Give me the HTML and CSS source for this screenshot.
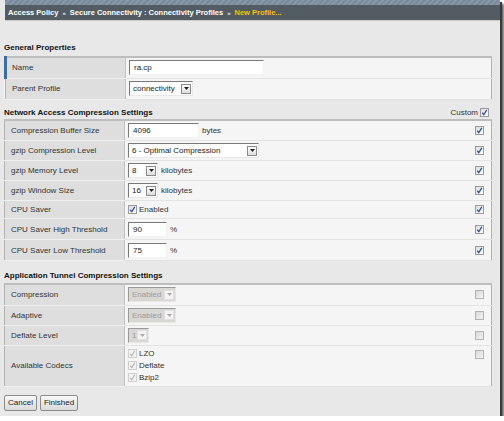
FILE: index.html
```html
<!DOCTYPE html>
<html>
<head>
<meta charset="utf-8">
<link rel="stylesheet" href="styles.css">
</head>
<body>
<div class="frame">
  <div class="topbar">
    <div class="stripe"></div>
    <div class="crumbs">
      <span>Access Policy</span><span class="sep">»</span><span>Secure Connectivity : Connectivity Profiles</span><span class="sep">»</span><span class="cur">New Profile...</span>
    </div>
  </div>

  <div class="content">
    <div class="sec-head first">General Properties</div>
    <table class="props">
      <tr class="r21">
        <td class="lbl marked">Name</td>
        <td class="val"><span class="input w135">ra.cp</span></td>
        <td class="chk"></td>
      </tr>
      <tr class="r21">
        <td class="lbl">Parent Profile</td>
        <td class="val"><span class="select w64"><span class="sel-text">connectivity</span><span class="sel-btn"><svg width="5" height="3" viewBox="0 0 5 3"><path d="M0 0H5L2.5 3Z" fill="#222"/></svg></span></span></td>
        <td class="chk"></td>
      </tr>
    </table>

    <div class="sec-head">
      <span>Network Access Compression Settings</span>
      <span class="custom">Custom <span class="cb on"><svg width="7" height="7" viewBox="0 0 7 7"><path d="M1.2 3.8L2.8 5.6L5.8 0.8" fill="none" stroke="#3552a8" stroke-width="1.3"/></svg></span></span>
    </div>
    <table class="props">
      <tr class="r21">
        <td class="lbl">Compression Buffer Size</td>
        <td class="val"><span class="input w71">4096</span><span class="unit">bytes</span></td>
        <td class="chk"><span class="cb on"><svg width="7" height="7" viewBox="0 0 7 7"><path d="M1.2 3.8L2.8 5.6L5.8 0.8" fill="none" stroke="#3552a8" stroke-width="1.3"/></svg></span></td>
      </tr>
      <tr class="r20">
        <td class="lbl">gzip Compression Level</td>
        <td class="val"><span class="select w131"><span class="sel-text">6 - Optimal Compression</span><span class="sel-btn"><svg width="5" height="3" viewBox="0 0 5 3"><path d="M0 0H5L2.5 3Z" fill="#222"/></svg></span></span></td>
        <td class="chk"><span class="cb on"><svg width="7" height="7" viewBox="0 0 7 7"><path d="M1.2 3.8L2.8 5.6L5.8 0.8" fill="none" stroke="#3552a8" stroke-width="1.3"/></svg></span></td>
      </tr>
      <tr class="r20">
        <td class="lbl">gzip Memory Level</td>
        <td class="val"><span class="select w30"><span class="sel-text">8</span><span class="sel-btn"><svg width="5" height="3" viewBox="0 0 5 3"><path d="M0 0H5L2.5 3Z" fill="#222"/></svg></span></span><span class="unit">kilobytes</span></td>
        <td class="chk"><span class="cb on"><svg width="7" height="7" viewBox="0 0 7 7"><path d="M1.2 3.8L2.8 5.6L5.8 0.8" fill="none" stroke="#3552a8" stroke-width="1.3"/></svg></span></td>
      </tr>
      <tr class="r20">
        <td class="lbl">gzip Window Size</td>
        <td class="val"><span class="select w30"><span class="sel-text">16</span><span class="sel-btn"><svg width="5" height="3" viewBox="0 0 5 3"><path d="M0 0H5L2.5 3Z" fill="#222"/></svg></span></span><span class="unit">kilobytes</span></td>
        <td class="chk"><span class="cb on"><svg width="7" height="7" viewBox="0 0 7 7"><path d="M1.2 3.8L2.8 5.6L5.8 0.8" fill="none" stroke="#3552a8" stroke-width="1.3"/></svg></span></td>
      </tr>
      <tr class="r18">
        <td class="lbl">CPU Saver</td>
        <td class="val"><span class="inline-cb"><span class="cb on"><svg width="7" height="7" viewBox="0 0 7 7"><path d="M1.2 3.8L2.8 5.6L5.8 0.8" fill="none" stroke="#3552a8" stroke-width="1.3"/></svg></span>Enabled</span></td>
        <td class="chk"><span class="cb on"><svg width="7" height="7" viewBox="0 0 7 7"><path d="M1.2 3.8L2.8 5.6L5.8 0.8" fill="none" stroke="#3552a8" stroke-width="1.3"/></svg></span></td>
      </tr>
      <tr class="r21">
        <td class="lbl">CPU Saver High Threshold</td>
        <td class="val"><span class="input w39">90</span><span class="unit">%</span></td>
        <td class="chk"><span class="cb on"><svg width="7" height="7" viewBox="0 0 7 7"><path d="M1.2 3.8L2.8 5.6L5.8 0.8" fill="none" stroke="#3552a8" stroke-width="1.3"/></svg></span></td>
      </tr>
      <tr class="r21">
        <td class="lbl">CPU Saver Low Threshold</td>
        <td class="val"><span class="input w39">75</span><span class="unit">%</span></td>
        <td class="chk"><span class="cb on"><svg width="7" height="7" viewBox="0 0 7 7"><path d="M1.2 3.8L2.8 5.6L5.8 0.8" fill="none" stroke="#3552a8" stroke-width="1.3"/></svg></span></td>
      </tr>
    </table>

    <div class="sec-head third">Application Tunnel Compression Settings</div>
    <table class="props">
      <tr class="r21">
        <td class="lbl">Compression</td>
        <td class="val"><span class="select dis w48"><span class="sel-text">Enabled</span><span class="sel-btn"><svg width="5" height="3" viewBox="0 0 5 3"><path d="M0 0H5L2.5 3Z" fill="#aaa"/></svg></span></span></td>
        <td class="chk"><span class="cb off"></span></td>
      </tr>
      <tr class="r20">
        <td class="lbl">Adaptive</td>
        <td class="val"><span class="select dis w48"><span class="sel-text">Enabled</span><span class="sel-btn"><svg width="5" height="3" viewBox="0 0 5 3"><path d="M0 0H5L2.5 3Z" fill="#aaa"/></svg></span></span></td>
        <td class="chk"><span class="cb off"></span></td>
      </tr>
      <tr class="r20">
        <td class="lbl">Deflate Level</td>
        <td class="val"><span class="select dis w21"><span class="sel-text">1</span><span class="sel-btn"><svg width="5" height="3" viewBox="0 0 5 3"><path d="M0 0H5L2.5 3Z" fill="#aaa"/></svg></span></span></td>
        <td class="chk"><span class="cb off"></span></td>
      </tr>
      <tr class="r41">
        <td class="lbl">Available Codecs</td>
        <td class="val">
          <div class="codecs">
            <span class="inline-cb"><span class="cb dim"><svg width="7" height="7" viewBox="0 0 7 7"><path d="M1.2 3.8L2.8 5.6L5.8 0.8" fill="none" stroke="#b4b4b4" stroke-width="1.1"/></svg></span>LZO</span>
            <span class="inline-cb"><span class="cb dim"><svg width="7" height="7" viewBox="0 0 7 7"><path d="M1.2 3.8L2.8 5.6L5.8 0.8" fill="none" stroke="#b4b4b4" stroke-width="1.1"/></svg></span>Deflate</span>
            <span class="inline-cb"><span class="cb dim"><svg width="7" height="7" viewBox="0 0 7 7"><path d="M1.2 3.8L2.8 5.6L5.8 0.8" fill="none" stroke="#b4b4b4" stroke-width="1.1"/></svg></span>Bzip2</span>
          </div>
        </td>
        <td class="chk top"><span class="cb off"></span></td>
      </tr>
    </table>

    <div class="buttons">
      <button class="btn">Cancel</button>
      <button class="btn">Finished</button>
    </div>
  </div>
</div>
</body>
</html>
```

FILE: styles.css
```css
html, body {
  margin: 0;
  padding: 0;
  background: #ffffff;
}
body {
  font-family: "Liberation Sans", Arial, sans-serif;
  font-size: 8px;
  color: #222;
}
.frame {
  width: 500px;
  height: 416px;
  background: #e8e8e8;
  box-shadow: 2px 2px 0 #3a3a3a, 4px 4px 2px #666;
  overflow: hidden;
}
.topbar {
  margin-left: 5px;
}
.stripe {
  height: 5px;
  background: repeating-linear-gradient(135deg, #7a8a9a 0px, #7a8a9a 2px, #8797a7 2px, #8797a7 4px);
}
.crumbs {
  height: 15px;
  background: #535b63;
  border-bottom: 1px solid #c9c9c9;
  color: #ffffff;
  font-weight: bold;
  font-size: 7.5px;
  line-height: 15px;
  padding-left: 3px;
  white-space: nowrap;
}
.crumbs .sep {
  font-size: 6px;
  margin: 0 4px;
  color: #e8e8e8;
}
.crumbs .cur {
  color: #f3c400;
}
.content {
  padding: 0 8px 0 4px;
}
.sec-head {
  display: flex;
  justify-content: space-between;
  align-items: flex-end;
  font-weight: bold;
  color: #111;
  height: 10px;
  line-height: 10px;
  margin-top: 8px;
  margin-bottom: 1px;
}
.sec-head.first {
  margin-top: 22px;
  margin-bottom: 3px;
}
.sec-head.third {
  margin-top: 10px;
  margin-bottom: 2px;
}
.custom {
  font-weight: normal;
  color: #333;
  display: flex;
  align-items: center;
  gap: 2px;
  margin-right: 3px;
}
table.props {
  width: 488px;
  border-collapse: collapse;
  border: 1px solid #b2b2b2;
  border-top: 2px solid #bdbdbd;
  background: #f5f5f5;
}
table.props td {
  padding: 0;
  border-bottom: 1px solid #e3e3e3;
  vertical-align: middle;
}
tr.r21 { height: 21px; }
tr.r20 { height: 20px; }
tr.r18 { height: 18px; }
tr.r41 { height: 41px; }
td.lbl {
  width: 113px;
  padding-left: 6px !important;
  background: #dedede;
  border-right: 1px solid #c2c2c2;
  color: #333;
  border-bottom: 1px solid #f0f0f0 !important;
}
td.lbl.marked {
  border-left: 3px solid #3d6da3;
  padding-left: 5px !important;
}
td.val {
  padding-left: 3px !important;
  white-space: nowrap;
}
td.chk {
  width: 16px;
  text-align: left;
}
td.chk.top {
  vertical-align: top;
  padding-top: 4px !important;
}
.input {
  display: inline-block;
  vertical-align: middle;
  box-sizing: border-box;
  height: 15px;
  line-height: 13px;
  background: #ffffff;
  border-top: 1px solid #7a7a7a;
  border-left: 1px solid #7a7a7a;
  border-right: 1px solid #f2f2f2;
  border-bottom: 1px solid #f2f2f2;
  padding-left: 4px;
  color: #222;
}
.w135 { width: 135px; }
.w71 { width: 71px; }
.w39 { width: 39px; }
.w64 { width: 64px; }
.w131 { width: 131px; }
.w30 { width: 30px; }
.w48 { width: 48px; }
.w21 { width: 21px; }
.select {
  display: inline-flex;
  vertical-align: middle;
  box-sizing: border-box;
  height: 15px;
  align-items: center;
  background: #ffffff;
  border-top: 1px solid #7a7a7a;
  border-left: 1px solid #7a7a7a;
  border-right: 1px solid #e8e8e8;
  border-bottom: 1px solid #e8e8e8;
  padding-right: 1px;
}
.sel-text {
  flex: 1;
  padding-left: 3px;
  line-height: 13px;
  overflow: hidden;
}
.sel-btn {
  box-sizing: border-box;
  width: 10px;
  height: 10px;
  border: 1px solid #8a8a8a;
  background: linear-gradient(#ffffff, #dcdcdc);
  display: flex;
  align-items: center;
  justify-content: center;
}
.select.dis {
  background: #d9d7d4;
  border-top: 1px solid #999;
  border-left: 1px solid #999;
}
.select.dis .sel-text {
  color: #9a9a9a;
}
.select.dis .sel-btn {
  background: #f4f4f4;
  border: 1px solid #e0e0e0;
}
.unit {
  margin-left: 3px;
  vertical-align: middle;
  color: #333;
}
.cb {
  box-sizing: border-box;
  display: inline-flex;
  align-items: center;
  justify-content: center;
  width: 9px;
  height: 9px;
  border: 1px solid #9c9c9c;
  background: linear-gradient(135deg, #dcdcdc, #ffffff);
  vertical-align: middle;
}
.cb.off {
  border-color: #b4b4b4;
  background: linear-gradient(135deg, #d8d8d8, #f4f4f4);
}
.cb.dim {
  border-color: #d0d0d0;
  background: #f2f2f2;
}
.inline-cb {
  display: inline-flex;
  align-items: center;
  gap: 2px;
  color: #333;
}
.codecs {
  display: flex;
  flex-direction: column;
  gap: 1px;
  line-height: 11px;
}
.buttons {
  margin-top: 8px;
  display: flex;
  gap: 3px;
}
.btn {
  font-family: "Liberation Sans", Arial, sans-serif;
  font-size: 8px;
  color: #222;
  height: 16px;
  padding: 0 3px;
  border: 1px solid #8c8c8c;
  border-radius: 2px;
  background: linear-gradient(#f8f8f8, #dadada);
}
```
